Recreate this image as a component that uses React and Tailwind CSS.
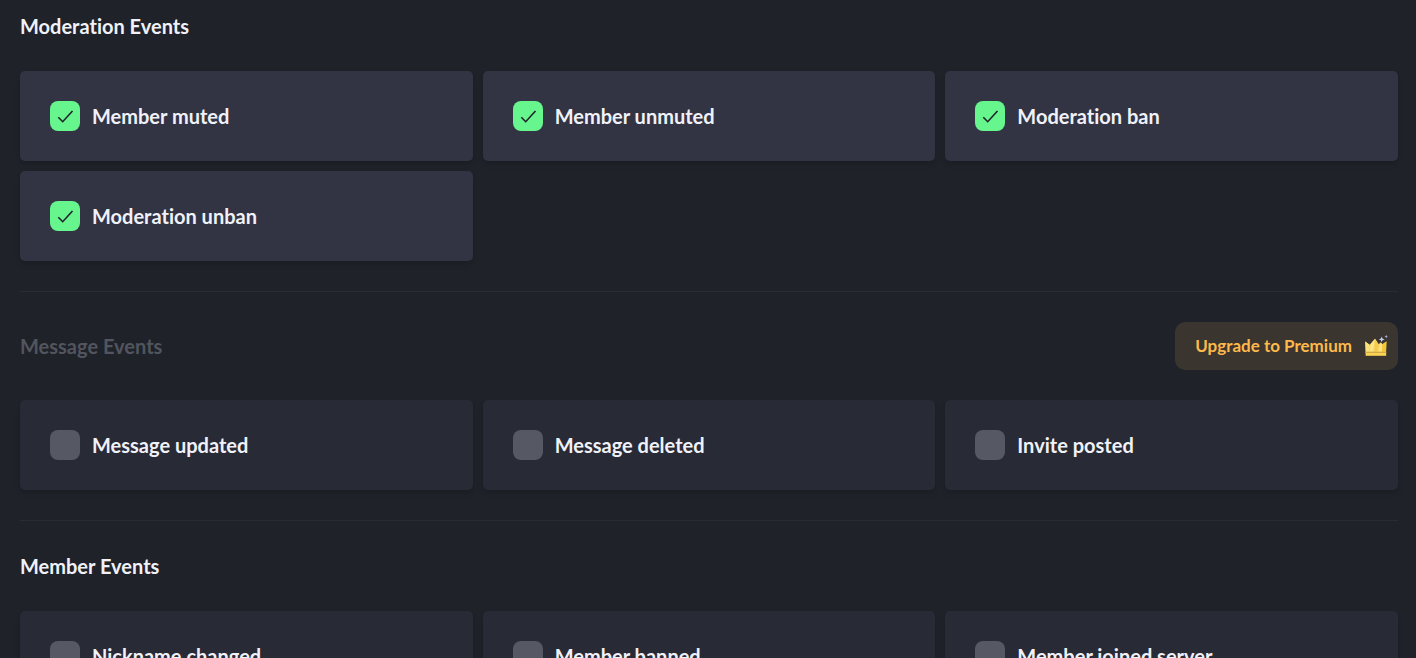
import { useState } from "react";

const sections = [
  {
    title: "Moderation Events",
    events: [
      { name: "Member muted", enabled: true },
      { name: "Member unmuted", enabled: true },
      { name: "Moderation ban", enabled: true },
      { name: "Moderation unban", enabled: true },
    ],
  },
  {
    title: "Message Events",
    premium: true,
    events: [
      { name: "Message updated" },
      { name: "Message deleted" },
      { name: "Invite posted" },
    ],
  },
  {
    title: "Member Events",
    events: [
      { name: "Nickname changed" },
      { name: "Member banned" },
      { name: "Member joined server" },
    ],
  },
];

function CrownIcon() {
  return (
    <svg width="24" height="24" viewBox="0 0 24 24" aria-hidden="true">
      <path
        d="m1.2 7.6 4.3 3.2L7 9.6l4-4.8 3.6 5.4 2-1.6 1.8 1.6 4-2.8L22 19H1.8Z"
        fill="#fbd75c"
      />
      <path d="m1.2 7.6 4.3 3.2L5 19H1.8Z" fill="#fce07a" />
      <path d="M11 4.8 8.4 19H5.6L7 9.6Z" fill="#fde68e" />
      <path d="m11 4.8 3.6 5.4L13 19h-2.6Z" fill="#f7cb50" />
      <path d="m16.6 8.6 1.8 1.6-1 8.8h-3.2Z" fill="#fce28a" />
      <path d="m22.4 7.4-4 2.8-.6 8.8H22Z" fill="#f8c437" />
      <path d="M1.6 17.6h20.6v4.2H1.6Z" fill="#fbd455" />
      <path d="M1.6 17.8h20.6v.9H1.6Z" fill="#c29a40" />
      <path d="m17.7 2.6.8 2 2 .8-2 .8-.8 2-.8-2-2-.8 2-.8Z" fill="#c3cdfa" />
      <path d="m22.2.8.5 1.3 1.3.5-1.3.5-.5 1.3-.5-1.3-1.3-.5 1.3-.5Z" fill="#a9b3e0" />
    </svg>
  );
}

function EventCard({ name, enabled }) {
  const [checked, setChecked] = useState(Boolean(enabled));

  return (
    <label
      className={`flex items-center gap-3 rounded-[5px] p-[30px] shadow-md cursor-pointer
        ${checked ? "bg-[#323443]" : "bg-[#282a35]"}`}>
      <span className="grid size-[30px] shrink-0">
        <input
          type="checkbox"
          checked={checked}
          onChange={(e) => setChecked(e.target.checked)}
          className="col-start-1 row-start-1 size-[30px] appearance-none rounded-lg bg-[#565863] checked:bg-[#67f68d]"
        />
        {checked && (
          <svg
            viewBox="0 0 30 30"
            className="pointer-events-none col-start-1 row-start-1 size-[30px]"
            fill="none"
            stroke="#1f2229"
            strokeWidth="1.6"
            aria-hidden="true">
            <path d="m8.3 16.3 4.4 4.4L22.5 10" />
          </svg>
        )}
      </span>
      <span className="text-[20px] leading-[30px] font-bold">{name}</span>
    </label>
  );
}

export default function App() {
  return (
    <main className="min-h-screen bg-[#1f2229] pt-[11px] pr-[18px] pl-5 font-['Lato',sans-serif] text-[#f0f1f9] [font-variant-ligatures:none]">
      {sections.map((section) => (
        <section
          key={section.title}
          className="mb-[30px] border-b border-[#292c34] pb-[30px] last:border-b-0">
          <div className="mb-[30px] flex items-center justify-between">
            <h2
              className={`text-[20px] leading-[30px] font-bold ${section.premium ? "text-[#52555e]" : ""}`}>
              {section.title}
            </h2>
            {section.premium && (
              <button
                type="button"
                className="flex h-12 items-center gap-3 rounded-[10px] bg-[#3b352f] pr-2.5 pl-5 text-[17px] font-bold text-[#fdb94b]">
                Upgrade to Premium
                <CrownIcon />
              </button>
            )}
          </div>
          <div className="grid grid-cols-3 gap-2.5">
            {section.events.map((event) => (
              <EventCard key={event.name} {...event} />
            ))}
          </div>
        </section>
      ))}
    </main>
  );
}
